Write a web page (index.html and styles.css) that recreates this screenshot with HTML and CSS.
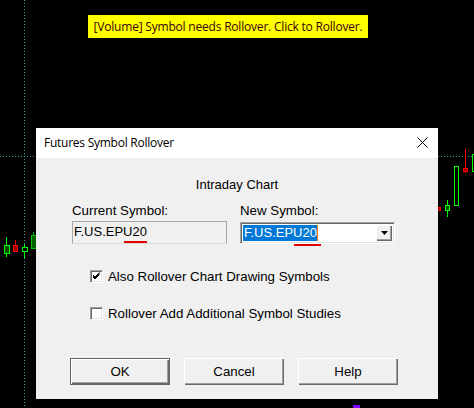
FILE: index.html
```html
<!DOCTYPE html>
<html>
<head>
<meta charset="utf-8">
<link rel="stylesheet" href="styles.css">
</head>
<body>
<div class="screen">
  <svg class="chart" width="474" height="408" viewBox="0 0 474 408">
    <line x1="24.5" y1="0" x2="24.5" y2="408" stroke="#2f9c9c" stroke-dasharray="1 2"/>
    <line x1="0" y1="156.5" x2="474" y2="156.5" stroke="#2f9c9c" stroke-dasharray="1 2"/>
    <line x1="6.5" y1="237" x2="6.5" y2="257" stroke="#00ff00"/>
    <rect x="4.5" y="245.5" width="5" height="8" stroke="#00ff00" fill="#005000"/>
    <line x1="15.5" y1="240" x2="15.5" y2="252" stroke="#ff0000"/>
    <rect x="13.5" y="245.5" width="4" height="6" stroke="#ff0000" fill="#a00000"/>
    <line x1="24.5" y1="244" x2="24.5" y2="258" stroke="#00ff00"/>
    <rect x="22.5" y="247.5" width="5" height="4" stroke="#00ff00" fill="#000"/>
    <line x1="33.5" y1="232" x2="33.5" y2="236" stroke="#00c000"/>
    <rect x="31.5" y="235.5" width="5" height="13" stroke="#00c000" fill="#006000"/>
    <rect x="437.5" y="207.5" width="3" height="3" stroke="#ff0000" fill="#a00000"/>
    <line x1="447.5" y1="200" x2="447.5" y2="217" stroke="#00ff00"/>
    <rect x="445.5" y="205.5" width="4" height="5" stroke="#00ff00" fill="#005000"/>
    <rect x="454.5" y="166.5" width="4" height="39" stroke="#00ff00" fill="#000"/>
    <line x1="465.5" y1="149" x2="465.5" y2="173" stroke="#ff0000"/>
    <rect x="463.5" y="168.5" width="4" height="3" stroke="#ff0000" fill="#a00000"/>
    <rect x="472.5" y="154.5" width="4" height="17" stroke="#00ff00" fill="#000"/>
    <rect x="353" y="405" width="7" height="3" fill="#8000ff"/>
  </svg>

  <div class="banner">[Volume] Symbol needs Rollover. Click to Rollover.</div>

  <div class="dialog">
    <div class="titlebar">
      <span class="title">Futures Symbol Rollover</span>
      <svg class="close" width="11" height="11" viewBox="0 0 11 11">
        <path d="M0.5 0.5 L10.5 10.5 M10.5 0.5 L0.5 10.5" stroke="#000" stroke-width="1"/>
      </svg>
    </div>
    <div class="body">
      <div class="heading">Intraday Chart</div>
      <div class="fields">
        <div class="field">
          <label class="label">Current Symbol:</label>
          <div class="readonly">F.US.EPU20<span class="mark mark-cur"></span></div>
        </div>
        <div class="field">
          <label class="label">New Symbol:</label>
          <div class="combo">
            <div class="combo-text"><span class="sel">F.US.EPU20</span><span class="caret"></span></div>
            <div class="combo-btn">
              <svg width="7" height="4" viewBox="0 0 7 4"><path d="M0 0 H7 L3.5 4 Z" fill="#000"/></svg>
            </div>
            <span class="mark mark-new"></span>
          </div>
        </div>
      </div>
      <div class="checks">
        <div class="check">
          <span class="box">
            <svg width="9" height="9" viewBox="0 0 9 9"><path d="M1 4 L3 6 L7.5 1.5 M1 5 L3 7 L7.5 2.5 M1 3 L3 5 L7.5 0.5" stroke="#000" stroke-width="1" fill="none"/></svg>
          </span>
          <span class="check-label">Also Rollover Chart Drawing Symbols</span>
        </div>
        <div class="check">
          <span class="box"></span>
          <span class="check-label">Rollover Add Additional Symbol Studies</span>
        </div>
      </div>
      <div class="buttons">
        <button class="btn default">OK</button>
        <button class="btn">Cancel</button>
        <button class="btn">Help</button>
      </div>
    </div>
  </div>
</div>
</body>
</html>
```
FILE: styles.css
```css
html, body {
  margin: 0;
  padding: 0;
  background: #000;
}
.screen {
  position: relative;
  width: 474px;
  height: 408px;
  overflow: hidden;
  background: #000;
  font-family: "Liberation Sans", Arial, sans-serif;
}
.chart {
  position: absolute;
  left: 0;
  top: 0;
}
.banner {
  position: absolute;
  left: 88px;
  top: 15px;
  width: 280px;
  height: 23px;
  background: #ffff00;
  color: #3a0000;
  font-family: "Open Sans", sans-serif;
  font-size: 12px;
  line-height: 23px;
  text-align: center;
  letter-spacing: -0.2px;
}
.dialog {
  position: absolute;
  left: 36px;
  top: 128px;
  width: 402px;
  height: 271px;
  background: #f0f0f0;
  display: flex;
  flex-direction: column;
}
.titlebar {
  height: 30px;
  background: #fff;
  display: flex;
  align-items: center;
  justify-content: space-between;
  padding: 0 10px 0 8px;
}
.title {
  font-family: "Open Sans", sans-serif;
  font-size: 12px;
  color: #000;
  letter-spacing: -0.25px;
  margin-top: -2px;
}
.close {
  margin-top: -1px;
}
.body {
  flex: 1;
  display: flex;
  flex-direction: column;
  font-size: 13px;
  color: #000;
}
.heading {
  text-align: center;
  margin-top: 19px;
  line-height: 15px;
}
.fields {
  display: grid;
  grid-template-columns: 155px 155px;
  column-gap: 13px;
  margin: 11px 0 0 36px;
}
.field {
  display: flex;
  flex-direction: column;
}
.label {
  line-height: 15px;
  margin-bottom: 3px;
  font-size: 13.3px;
}
.readonly {
  position: relative;
  height: 23px;
  box-sizing: border-box;
  border: 1px solid #a8a8a8;
  border-bottom-color: #dcdcdc;
  background: #f0f0f0;
  line-height: 20px;
  padding-left: 1px;
  font-size: 13px;
}
.mark {
  position: absolute;
  height: 2px;
  background: #e00000;
}
.mark-cur {
  left: 51px;
  width: 23px;
  top: 19px;
}
.combo {
  position: relative;
  height: 22px;
  margin-top: 1px;
  box-sizing: border-box;
  border-top: 1px solid #a0a0a0;
  border-left: 1px solid #a0a0a0;
  border-right: 1px solid #fff;
  border-bottom: 1px solid #fff;
  box-shadow: inset 1px 1px 0 #696969, inset -1px -1px 0 #e3e3e3;
  background: #fff;
  display: flex;
  padding: 2px;
  font-size: 13px;
}
.combo-text {
  flex: 1;
  display: flex;
  align-items: center;
}
.sel {
  background: #0078d7;
  color: #fff;
  line-height: 16px;
  height: 16px;
  padding-left: 1px;
}
.caret {
  width: 1px;
  height: 16px;
  background: #ff8000;
}
.combo-btn {
  width: 16px;
  box-sizing: border-box;
  background: #f0f0f0;
  box-shadow: inset 1px 1px 0 #fff, inset -1px -1px 0 #696969, inset -2px -2px 0 #a0a0a0;
  display: flex;
  align-items: center;
  justify-content: center;
}
.mark-new {
  left: 53px;
  width: 27px;
  top: 21px;
}
.checks {
  display: flex;
  flex-direction: column;
  gap: 24px;
  margin: 26px 0 0 54px;
}
.check {
  display: flex;
  align-items: center;
  gap: 5px;
  height: 13px;
}
.box {
  width: 13px;
  height: 13px;
  box-sizing: border-box;
  background: #fff;
  border-top: 1px solid #a0a0a0;
  border-left: 1px solid #a0a0a0;
  border-right: 1px solid #fff;
  border-bottom: 1px solid #fff;
  box-shadow: inset 1px 1px 0 #696969, inset -1px -1px 0 #e3e3e3;
  display: flex;
  align-items: center;
  justify-content: center;
}
.check-label {
  line-height: 15px;
  font-size: 13.3px;
}
.buttons {
  display: flex;
  gap: 14px;
  margin: 38px 0 0 34px;
}
.btn {
  width: 100px;
  height: 27px;
  box-sizing: border-box;
  font-family: "Liberation Sans", Arial, sans-serif;
  font-size: 13.3px;
  color: #000;
  background: #f0f0f0;
  border: none;
  padding: 0;
  box-shadow: inset 1px 1px 0 #fff, inset -1px -1px 0 #696969, inset -2px -2px 0 #a0a0a0;
}
.btn.default {
  border: 1px solid #646464;
}
```
